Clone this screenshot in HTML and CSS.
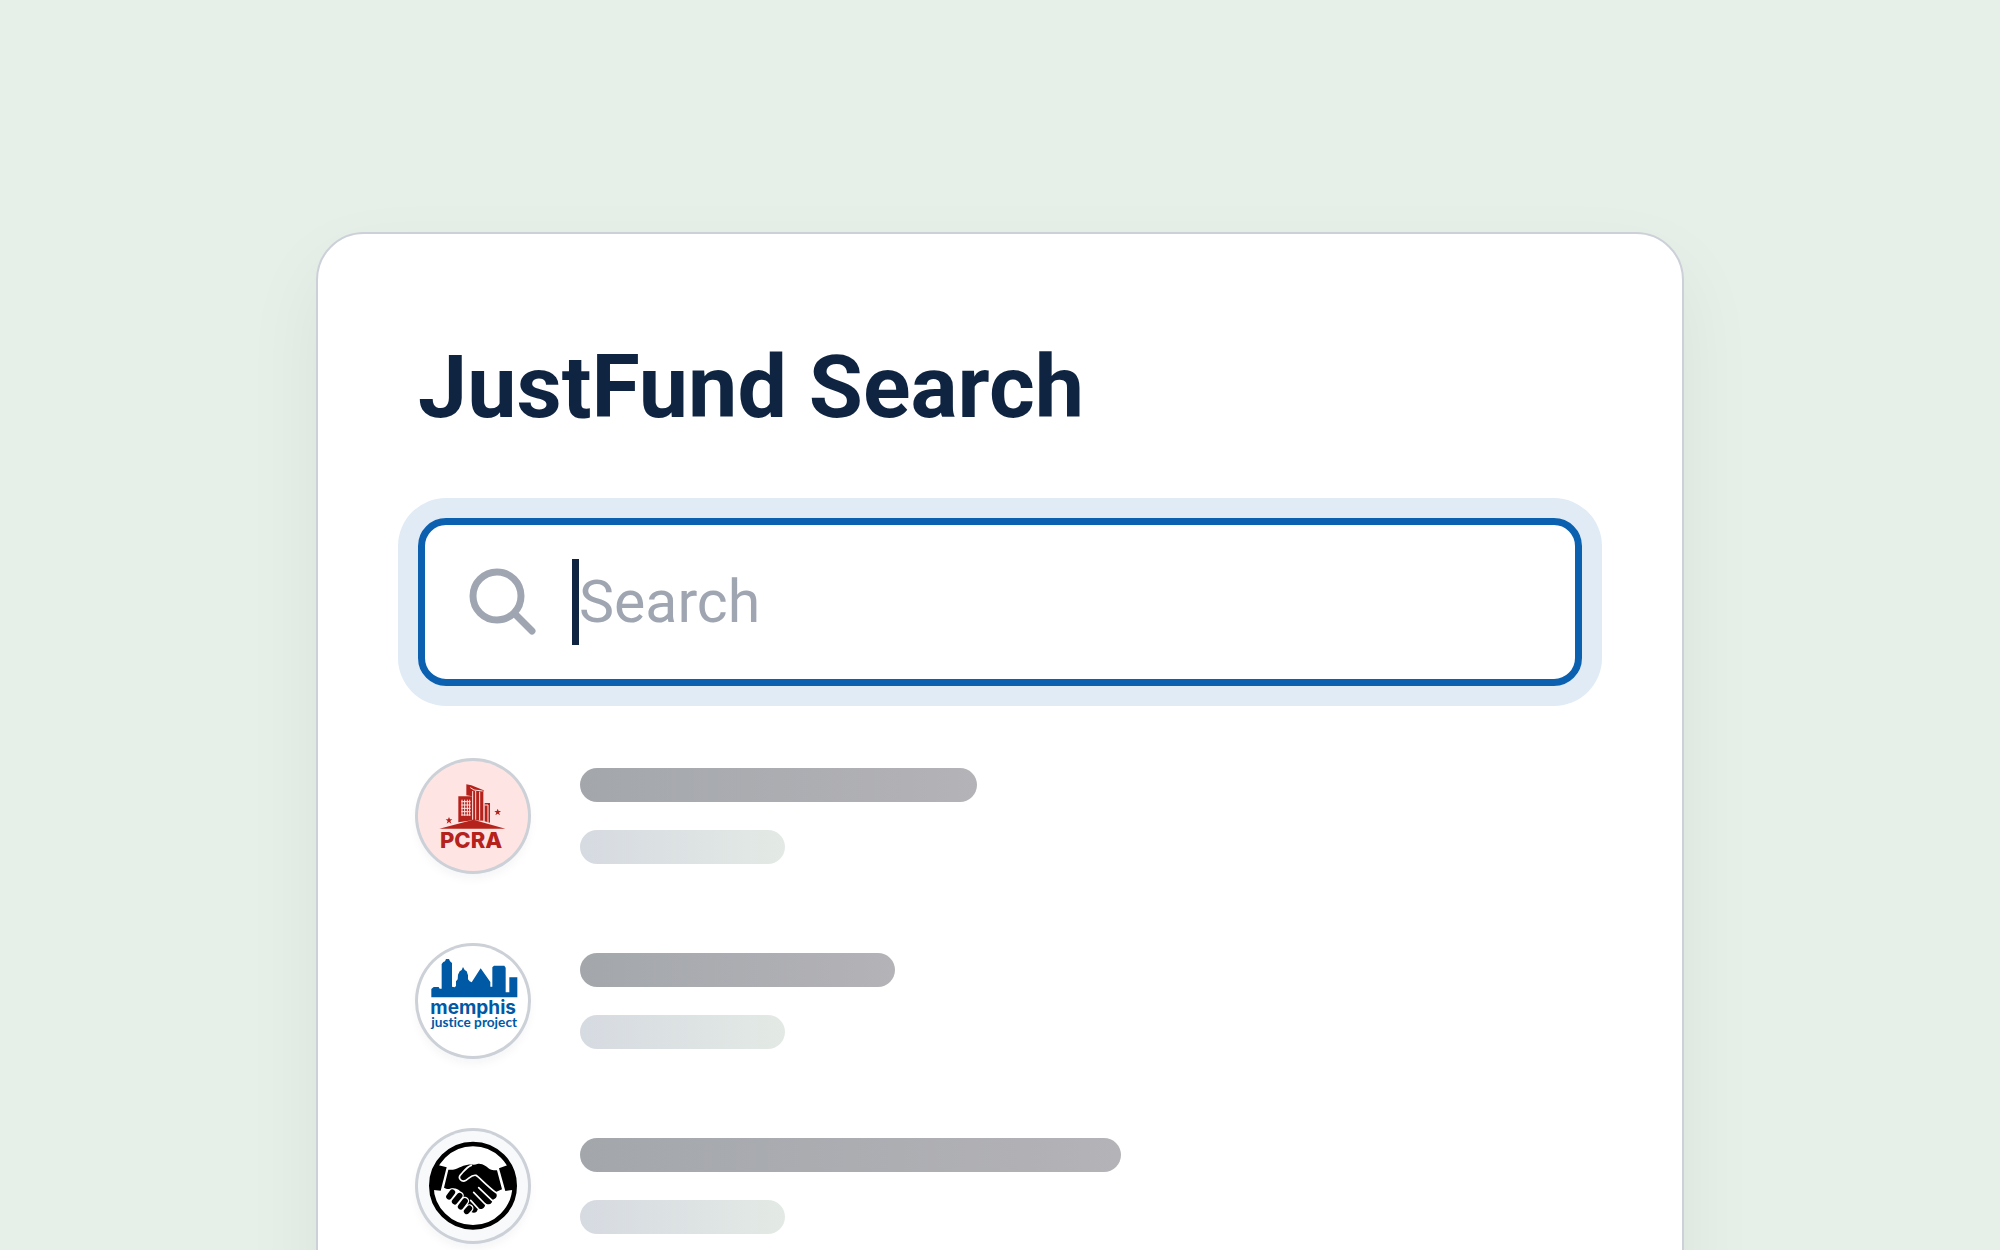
FILE: index.html
```html
<!DOCTYPE html>
<html lang="en">
<head>
  <meta charset="UTF-8">
  <meta name="viewport" content="width=device-width, initial-scale=1.0">
  <title>JustFund Search</title>
  <link rel="stylesheet" href="styles.css">
</head>
<body>
  <main class="card">
    <h1 class="title">JustFund Search</h1>

    <label class="search">
      <svg class="search-icon" viewBox="0 0 68 68" aria-hidden="true">
        <circle cx="28" cy="28" r="24"/>
        <path d="M46 46L63 63"/>
      </svg>
      <span class="caret"></span>
      <input class="search-input" type="text" placeholder="Search" aria-label="Search">
    </label>

    <ul class="results">
      <li class="result">
        <svg class="avatar avatar-pcra" viewBox="56 62 330 330" role="img" aria-label="PCRA">
          <g fill="#b5221b">
            <path d="M201 132L216 135L253 150L253 241L219 240L219 168L201 165Z"/>
            <path d="M177 168L219 168V240L177 246Z"/>
            <path d="M255 188H272V247L255 243Z"/>
            <path d="M120 265L222 238L318 265Z"/>
            <path d="M149 230l3 7h7l-6 5 3 8-7-5-7 5 3-8-6-5h7z"/>
            <path d="M295 205l3 7h7l-6 5 3 8-7-5-7 5 3-8-6-5h7z"/>
            <text class="pcra-name" x="122" y="323">PCRA</text>
          </g>
          <g class="pcra-lines">
            <path d="M188 178V226M196 178V226M204 178V226M211 178V226"/>
            <path d="M186 184H214M186 194H214M186 204H214M186 214H214M186 224H214"/>
            <path d="M220 152V238M229 152V238M241 154V240M254 153V244M266 194V246M256 194H266"/>
            <path d="M213 142L224 149L250 152"/>
          </g>
        </svg>
        <div class="lines">
          <span class="line line-name name-medium"></span>
          <span class="line line-detail"></span>
        </div>
      </li>
      <li class="result">
        <svg class="avatar" viewBox="56 62 330 330" role="img" aria-label="Memphis Justice Project">
          <g fill="#0059a5">
            <path d="M96 216V191L103 185H118L121 190H127V116L132 110L137 108L140 101H149L152 108L158 113V184L166 186L170 182V168L175 162L176 148L181 138L187 134L191 125L196 134L202 138L206 150V162L211 168L217 171L244 129L273 170V184H279V126L284 121H315L319 127V201H330V156H354V216Z"/>
            <text class="memphis-name" x="93" y="267">memphis</text>
            <text class="memphis-sub" x="96" y="305">justice project</text>
          </g>
        </svg>
        <div class="lines">
          <span class="line line-name name-short"></span>
          <span class="line line-detail"></span>
        </div>
      </li>
      <li class="result">
        <svg class="avatar avatar-shake" viewBox="56 62 330 330" role="img" aria-label="Handshake">
          <circle cx="221" cy="226" r="125" fill="#fff" stroke="#000" stroke-width="14"/>
          <!-- cuffs -->
          <path d="M115 164L142 171L124 241L96 238L92 205Z"/>
          <path d="M299 174L328 163L349 205L346 238L318 242Z"/>
          <!-- hands -->
          <path d="M147 178C170 182 184 165 206 163C218 162 226 165 234 161C250 158 262 170 272 177C280 181 287 180 293 180L308 237L288 246C297 255 291 268 278 268C281 280 267 287 257 278C260 292 246 302 236 292C235 306 226 310 217 306L182 242C164 225 150 243 134 232Z"/>
          <g class="fingers-gap">
            <path d="M149 259L159 246M166 274L181 256M184 289L197 272M202 303L210 294"/>
          </g>
          <g class="fingers">
            <path d="M149 259L159 246M166 274L181 256M184 289L197 272M202 303L210 294"/>
          </g>
          <g class="creases">
            <path d="M216 165C203 169 195 181 184 193C174 204 187 217 200 210C210 204 217 192 230 195C240 201 262 226 290 247"/>
            <path d="M238 232L278 270M223 246L257 281M214 270L235 293"/>
          </g>
        </svg>
        <div class="lines">
          <span class="line line-name name-long"></span>
          <span class="line line-detail"></span>
        </div>
      </li>
    </ul>
  </main>
</body>
</html>
```

FILE: styles.css
```css
* {
  box-sizing: border-box;
}

body {
  margin: 0;
  height: 100vh;
  overflow: hidden;
  background: #e6f0e8;
  font-family: Roboto, "Open Sans", sans-serif;
  color: #0f2440;
}

.card {
  width: 68.4%;
  margin: 232px auto 0;
  padding: 100px;
  background: #fff;
  border: 2px solid #ccd0d9;
  border-radius: 48px;
  box-shadow: 0 32px 80px rgba(32, 24, 48, 0.06);
}

.title {
  margin: 0 0 78px;
  font-size: 88px;
  font-weight: 700;
  line-height: 106px;
}

.search {
  display: flex;
  align-items: center;
  height: 168px;
  padding: 0 44px;
  border: 7px solid #0b61b0;
  border-radius: 28px;
  box-shadow: 0 0 0 20px #e0ebf5;
}

.search-icon {
  flex: none;
  width: 68px;
  height: 68px;
  margin-right: 35px;
  fill: none;
  stroke: #9fa6b2;
  stroke-width: 7;
  stroke-linecap: round;
}

.caret {
  flex: none;
  width: 7px;
  height: 86px;
  background: #0f2440;
}

.search-input {
  flex: 1;
  min-width: 0;
  padding: 0;
  border: 0;
  outline: 0;
  background: none;
  font-family: inherit;
  font-size: 59px;
  line-height: 80px;
  color: inherit;
}

.search-input::placeholder {
  color: #9fa6b2;
  opacity: 1;
}

.results {
  display: flex;
  flex-direction: column;
  gap: 75px;
  margin: 75px 0 0;
  padding: 0;
  list-style: none;
}

.result {
  display: flex;
  align-items: center;
  gap: 52px;
}

.avatar {
  flex: none;
  width: 110px;
  height: 110px;
  border-radius: 50%;
  background: #fff;
  box-shadow: 0 0 0 3px #ccd0d7, 0 6px 12px rgba(15, 36, 64, 0.06);
}

.avatar-pcra {
  background: #fee5e4;
}

.avatar-shake {
  background: #f7f9fb;
}

.pcra-name {
  font: 800 66px Inter, sans-serif;
}

.pcra-lines {
  fill: none;
  stroke: #fee5e4;
  stroke-width: 3;
}

.memphis-name {
  font: 700 57px Inter, sans-serif;
}

.memphis-sub {
  font: 700 41px Lato, sans-serif;
  font-variant-ligatures: none;
}

.fingers,
.fingers-gap,
.creases {
  fill: none;
  stroke: #000;
  stroke-width: 17;
  stroke-linecap: round;
}

.fingers-gap {
  stroke: #fff;
  stroke-width: 25;
}

.creases {
  stroke: #fff;
  stroke-width: 5;
  stroke-linejoin: round;
}

.lines {
  flex: 1;
  display: flex;
  flex-direction: column;
  gap: 28px;
}

.line {
  height: 34px;
  border-radius: 17px;
}

.line-name {
  background: linear-gradient(90deg, #a3a7ac, #b4b3b7);
}

.line-detail {
  width: 205px;
  background: linear-gradient(90deg, #d6dae1, #e3eae5);
}

.name-short {
  width: 315px;
}

.name-medium {
  width: 397px;
}

.name-long {
  width: 541px;
}
```
